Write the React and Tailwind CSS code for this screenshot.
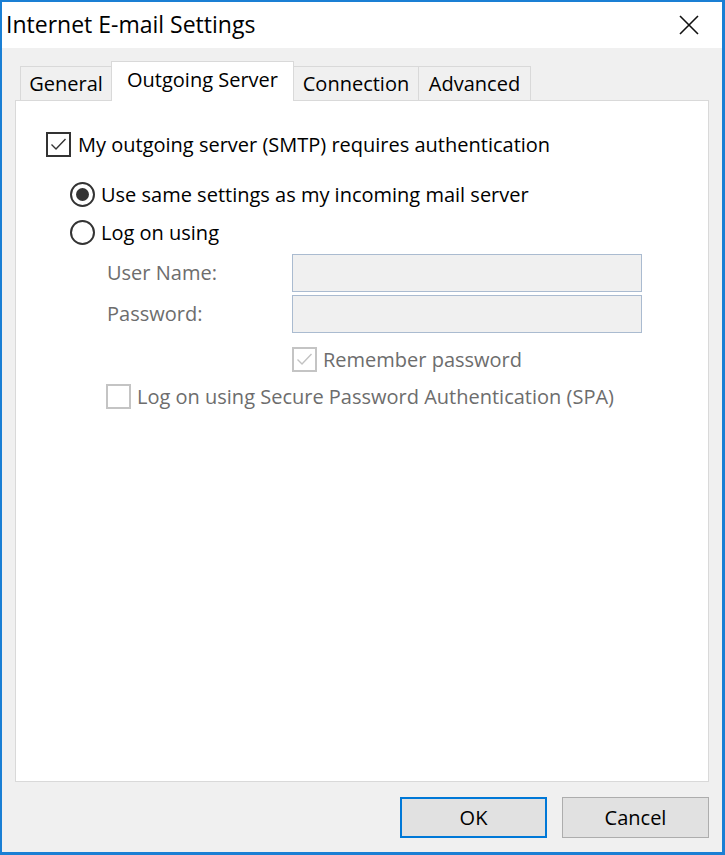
import React from 'react';

const font = { fontFamily: '"Open Sans", "Noto Sans", sans-serif' };

function Check({ disabled }) {
  return (
    <div className={`w-[25px] h-[25px] shrink-0 border-2 ${disabled ? 'border-[#c4c4c4]' : 'border-[#333333]'} bg-white flex items-center justify-center`}>
      <svg width="19" height="19" viewBox="0 0 19 19">
        <path d="M2.5 9.5 L7 14 L16.5 4" fill="none" stroke={disabled ? '#c2c2c2' : '#333333'} strokeWidth="1.4" />
      </svg>
    </div>
  );
}

function EmptyCheck() {
  return <div className="w-[25px] h-[25px] shrink-0 border-2 border-[#c4c4c4] bg-white" />;
}

function Radio({ on }) {
  return (
    <div className="w-[25px] h-[25px] shrink-0 rounded-full border-2 border-[#333333] bg-white flex items-center justify-center">
      {on && <div className="w-[13px] h-[13px] rounded-full bg-[#333333]" />}
    </div>
  );
}

export default function App() {
  return (
    <div className="w-[725px] h-[855px] bg-[#f0f0f0] border-t-2 border-l-2 border-b-[3px] border-r-[3px] border-[#1a7fd4] flex flex-col text-black" style={font}>
      <div className="h-[46px] shrink-0 bg-white flex items-center justify-between pl-[4px] pr-[23px]">
        <span className="text-[23px] leading-none pb-[2px]">Internet E-mail Settings</span>
        <svg width="20" height="20" viewBox="0 0 20 20">
          <path d="M1 1 L19 19 M19 1 L1 19" stroke="#111" strokeWidth="1.6" />
        </svg>
      </div>

      <div className="flex-1 flex flex-col px-[13px] pt-[13px]">
        <div className="flex items-end pl-[5px] h-[39px] text-[20px]">
          <div className="w-[91px] h-[34px] bg-[#f0f0f0] border border-r-0 border-b-0 border-[#d9d9d9] flex items-center justify-center pt-[1px]">General</div>
          <div className="w-[183px] h-[40px] -mb-px z-10 bg-white border border-b-0 border-[#d9d9d9] flex items-start justify-center pt-[3px]">Outgoing Server</div>
          <div className="w-[124px] h-[34px] bg-[#f0f0f0] border-t border-[#d9d9d9] flex items-center justify-center pt-[1px]">Connection</div>
          <div className="w-[113px] h-[34px] bg-[#f0f0f0] border border-b-0 border-[#d9d9d9] flex items-center justify-center pt-[1px]">Advanced</div>
        </div>

        <div className="h-[682px] bg-white border border-[#d9d9d9] flex flex-col pt-[31px] pl-[30px] text-[20px]">
          <div className="flex items-center gap-[7px] h-[25px]">
            <Check />
            <span>My outgoing server (SMTP) requires authentication</span>
          </div>

          <div className="flex items-center gap-[6px] h-[25px] mt-[25px] ml-[24px]">
            <Radio on />
            <span>Use same settings as my incoming mail server</span>
          </div>
          <div className="flex items-center gap-[6px] h-[25px] mt-[13px] ml-[24px]">
            <Radio />
            <span>Log on using</span>
          </div>

          <div className="flex items-center h-[38px] mt-[9px] ml-[61px] text-[#6d6d6d]">
            <span className="w-[185px] shrink-0">User Name:</span>
            <div className="w-[350px] h-full bg-[#f0f0f0] border border-[#aabbd0]" />
          </div>
          <div className="flex items-center h-[38px] mt-[3px] ml-[61px] text-[#6d6d6d]">
            <span className="w-[185px] shrink-0">Password:</span>
            <div className="w-[350px] h-full bg-[#f0f0f0] border border-[#aabbd0]" />
          </div>

          <div className="flex items-center gap-[6px] h-[25px] mt-[14px] ml-[246px] text-[#6d6d6d]">
            <Check disabled />
            <span>Remember password</span>
          </div>
          <div className="flex items-center gap-[6px] h-[25px] mt-[12px] ml-[60px] text-[#6d6d6d]">
            <EmptyCheck />
            <span>Log on using Secure Password Authentication (SPA)</span>
          </div>
        </div>

        <div className="flex justify-end gap-[15px] mt-[15px] text-[20px]">
          <button className="w-[147px] h-[41px] bg-[#e1e1e1] border-2 border-[#0078d7]">OK</button>
          <button className="w-[147px] h-[41px] bg-[#e1e1e1] border border-[#adadad]">Cancel</button>
        </div>
      </div>
    </div>
  );
}
